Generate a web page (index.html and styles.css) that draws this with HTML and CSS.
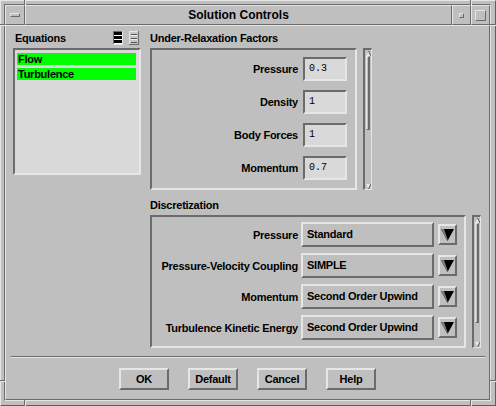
FILE: index.html
```html
<!DOCTYPE html>
<html>
<head>
<meta charset="utf-8">
<link rel="stylesheet" href="styles.css">
</head>
<body>
<div class="window">
  <span class="tick tick-v tick-tl"></span>
  <span class="tick tick-v tick-tr"></span>
  <span class="tick tick-v tick-bl"></span>
  <span class="tick tick-v tick-br"></span>
  <span class="tick tick-h tick-lt"></span>
  <span class="tick tick-h tick-lb"></span>
  <span class="tick tick-h tick-rt"></span>
  <span class="tick tick-h tick-rb"></span>
  <div class="frame-inner">
    <div class="titlebar">
      <div class="tb-seg tb-menu"><span class="menu-bar"></span></div>
      <div class="tb-seg tb-title">Solution Controls</div>
      <div class="tb-seg tb-small"><span class="mini-sq"></span></div>
      <div class="tb-seg tb-small"><span class="max-sq"></span></div>
    </div>
    <div class="client">
      <div class="main">
        <div class="eq-col">
          <div class="eq-head">
            <span class="label">Equations</span>
            <span class="icons">
              <svg width="10" height="14" viewBox="0 0 10 14">
                <rect width="10" height="14" fill="#e6e6e6"/>
                <rect width="9" height="13" fill="#6b6b6b"/>
                <rect x="1" y="1" width="8" height="12" fill="#ffffff"/>
                <rect x="1" y="1" width="8" height="3" fill="#000"/>
                <rect x="1" y="5" width="8" height="3" fill="#000"/>
                <rect x="1" y="9" width="8" height="3" fill="#000"/>
              </svg>
              <svg width="10" height="14" viewBox="0 0 10 14">
                <rect width="10" height="14" fill="#6b6b6b"/>
                <rect width="9" height="13" fill="#e6e6e6"/>
                <rect x="1" y="1" width="8" height="12" fill="#c6c6c6"/>
                <rect x="2" y="3" width="6" height="1" fill="#555"/>
                <rect x="2" y="4" width="6" height="1" fill="#f0f0f0"/>
                <rect x="2" y="7" width="6" height="1" fill="#555"/>
                <rect x="2" y="8" width="6" height="1" fill="#f0f0f0"/>
                <rect x="2" y="11" width="6" height="1" fill="#555"/>
              </svg>
            </span>
          </div>
          <div class="listbox">
            <div class="item">Flow</div>
            <div class="item">Turbulence</div>
          </div>
        </div>
        <div class="right-col">
          <div class="sec-head">Under-Relaxation Factors</div>
          <div class="sec-row urf-row">
            <div class="panel urf">
              <div class="frow"><span class="lbl">Pressure</span><span class="entry">0.3</span></div>
              <div class="frow"><span class="lbl">Density</span><span class="entry">1</span></div>
              <div class="frow"><span class="lbl">Body Forces</span><span class="entry">1</span></div>
              <div class="frow"><span class="lbl">Momentum</span><span class="entry">0.7</span></div>
            </div>
            <div class="vscroll">
              <span class="vs-arrow"><svg width="5" height="5" viewBox="0 0 5 5"><polygon points="0,5 2.5,0 5,5" fill="#e6e6e6"/><line x1="2.5" y1="0" x2="5" y2="5" stroke="#555" stroke-width="1"/></svg></span>
              <span class="slider slider-urf"></span>
              <span class="vs-fill"></span>
              <span class="vs-arrow"><svg width="5" height="5" viewBox="0 0 5 5"><polygon points="0,0 5,0 2.5,5" fill="#e6e6e6"/><line x1="5" y1="0" x2="2.5" y2="5" stroke="#555" stroke-width="1"/></svg></span>
            </div>
          </div>
          <div class="sec-head disc-head">Discretization</div>
          <div class="sec-row disc-row">
            <div class="panel disc">
              <div class="drow"><span class="lbl">Pressure</span><span class="opt">Standard</span><span class="arrow-btn"><svg width="13" height="12" viewBox="0 0 13 12"><polygon points="0,0 13,0 6.5,12" fill="#000"/><polygon points="0,0 3,0 6.8,11 6.5,12" fill="#7a7a7a"/></svg></span></div>
              <div class="drow"><span class="lbl">Pressure-Velocity Coupling</span><span class="opt">SIMPLE</span><span class="arrow-btn"><svg width="13" height="12" viewBox="0 0 13 12"><polygon points="0,0 13,0 6.5,12" fill="#000"/><polygon points="0,0 3,0 6.8,11 6.5,12" fill="#7a7a7a"/></svg></span></div>
              <div class="drow"><span class="lbl">Momentum</span><span class="opt">Second Order Upwind</span><span class="arrow-btn"><svg width="13" height="12" viewBox="0 0 13 12"><polygon points="0,0 13,0 6.5,12" fill="#000"/><polygon points="0,0 3,0 6.8,11 6.5,12" fill="#7a7a7a"/></svg></span></div>
              <div class="drow"><span class="lbl">Turbulence Kinetic Energy</span><span class="opt">Second Order Upwind</span><span class="arrow-btn"><svg width="13" height="12" viewBox="0 0 13 12"><polygon points="0,0 13,0 6.5,12" fill="#000"/><polygon points="0,0 3,0 6.8,11 6.5,12" fill="#7a7a7a"/></svg></span></div>
            </div>
            <div class="vscroll">
              <span class="vs-arrow"><svg width="5" height="5" viewBox="0 0 5 5"><polygon points="0,5 2.5,0 5,5" fill="#e6e6e6"/><line x1="2.5" y1="0" x2="5" y2="5" stroke="#555" stroke-width="1"/></svg></span>
              <span class="slider slider-disc"></span>
              <span class="vs-fill"></span>
              <span class="vs-arrow"><svg width="5" height="5" viewBox="0 0 5 5"><polygon points="0,0 5,0 2.5,5" fill="#e6e6e6"/><line x1="5" y1="0" x2="2.5" y2="5" stroke="#555" stroke-width="1"/></svg></span>
            </div>
          </div>
        </div>
      </div>
      <div class="sep"></div>
      <div class="buttons">
        <span class="btn">OK</span>
        <span class="btn">Default</span>
        <span class="btn">Cancel</span>
        <span class="btn">Help</span>
      </div>
    </div>
  </div>
</div>
</body>
</html>
```

FILE: styles.css
```css
* { box-sizing: border-box; }
html, body { margin: 0; padding: 0; }
body {
  width: 496px;
  height: 406px;
  overflow: hidden;
  background: #bfbfbf;
  font-family: "Liberation Sans", Arial, sans-serif;
  font-weight: bold;
  font-size: 11px;
  letter-spacing: -0.25px;
  color: #000;
}

.window {
  position: relative;
  width: 496px;
  height: 406px;
  background: #bfbfbf;
  border: 1px solid;
  border-color: #e6e6e6 #5e5e5e #5e5e5e #e6e6e6;
  padding: 3px 4px 4px 3px;
}

.tick { position: absolute; display: block; }
.tick-v { width: 2px; border-left: 1px solid #6b6b6b; border-right: 1px solid #e6e6e6; }
.tick-h { height: 2px; border-top: 1px solid #6b6b6b; border-bottom: 1px solid #e6e6e6; }
.tick-tl { left: 23px; top: -1px; height: 5px; }
.tick-tr { left: 469px; top: -1px; height: 5px; }
.tick-bl { left: 23px; top: 399px; height: 6px; }
.tick-br { left: 469px; top: 399px; height: 6px; }
.tick-lt { left: -1px; top: 23px; width: 5px; }
.tick-lb { left: -1px; top: 379px; width: 5px; }
.tick-rt { left: 489px; top: 23px; width: 6px; }
.tick-rb { left: 489px; top: 379px; width: 6px; }

.frame-inner {
  height: 100%;
  border: 1px solid;
  border-color: #6b6b6b #e6e6e6 #e6e6e6 #6b6b6b;
  display: flex;
  flex-direction: column;
}

.titlebar { display: flex; height: 20px; }
.tb-seg {
  border: 1px solid;
  border-color: #e6e6e6 #6b6b6b #6b6b6b #e6e6e6;
  display: flex;
  align-items: center;
  justify-content: center;
}
.tb-menu { width: 20px; }
.tb-title { flex: 1; font-size: 12px; letter-spacing: 0; line-height: 18px; }
.tb-small { width: 19px; }
.menu-bar {
  width: 10px; height: 4px;
  border: 1px solid;
  border-color: #e6e6e6 #6b6b6b #6b6b6b #e6e6e6;
}
.mini-sq {
  width: 5px; height: 5px;
  border: 1px solid;
  border-color: #e6e6e6 #6b6b6b #6b6b6b #e6e6e6;
}
.max-sq {
  width: 11px; height: 11px;
  border: 1px solid;
  border-color: #e6e6e6 #6b6b6b #6b6b6b #e6e6e6;
}

.client {
  flex: 1;
  border: 1px solid;
  border-color: #e6e6e6 #6b6b6b #6b6b6b #e6e6e6;
  display: flex;
  flex-direction: column;
}

.main { display: flex; padding: 5px 0 0 7px; }

.eq-col { width: 128px; margin-right: 9px; }
.eq-head { height: 17px; display: flex; justify-content: space-between; padding: 0 2px; }
.eq-head .label { line-height: 15px; }
.icons { display: flex; gap: 6px; }
.icons svg { display: block; }
.listbox {
  height: 127px;
  border: 2px solid;
  border-color: #6b6b6b #e6e6e6 #e6e6e6 #6b6b6b;
  background: #d9d9d9;
  padding: 3px 3px 0 2px;
}
.item {
  height: 12px;
  line-height: 12px;
  background: #00ff00;
  padding-left: 1px;
  margin-bottom: 3px;
}

.right-col { width: 331px; }
.sec-head { height: 17px; line-height: 15px; }
.disc-head { height: 25px; padding-top: 8px; }
.sec-row { display: flex; gap: 6px; }
.urf-row { height: 142px; }
.disc-row { height: 133px; }

.panel {
  border: 2px solid;
  border-color: #6b6b6b #e6e6e6 #e6e6e6 #6b6b6b;
  display: flex;
  flex-direction: column;
  align-items: flex-end;
  overflow: hidden;
}
.urf { width: 207px; padding: 7px 8px 0 0; gap: 9px; }
.disc { width: 316px; padding: 5px 7px 0 0; gap: 6px; }

.frow, .drow { display: flex; align-items: center; }
.frow .lbl { margin-right: 5px; }
.drow .lbl { margin-right: 3px; }
.entry {
  width: 44px;
  height: 24px;
  border: 2px solid;
  border-color: #6b6b6b #e6e6e6 #e6e6e6 #6b6b6b;
  background: #d9d9d9;
  font-family: "Liberation Mono", monospace;
  font-weight: normal;
  font-size: 10px;
  letter-spacing: 0;
  line-height: 20px;
  padding-left: 4px;
}
.opt {
  width: 133px;
  height: 25px;
  border: 2px solid;
  border-color: #e6e6e6 #6b6b6b #6b6b6b #e6e6e6;
  line-height: 21px;
  padding-left: 4px;
}
.arrow-btn {
  width: 19px;
  height: 21px;
  margin-left: 4px;
  border: 2px solid;
  border-color: #e6e6e6 #6b6b6b #6b6b6b #e6e6e6;
  display: flex;
  align-items: center;
  justify-content: center;
}
.arrow-btn svg { display: block; }

.vscroll {
  width: 9px;
  height: 100%;
  border-style: solid;
  border-width: 2px 1px 1px 2px;
  border-color: #6b6b6b #e6e6e6 #e6e6e6 #6b6b6b;
  display: flex;
  flex-direction: column;
}
.vs-arrow { height: 6px; display: flex; align-items: center; justify-content: center; }
.vs-arrow svg { display: block; }
.slider {
  margin-left: 1px;
  width: 4px;
  border-style: solid;
  border-width: 1px 2px 1px 1px;
  border-color: #e6e6e6 #6b6b6b #6b6b6b #e6e6e6;
}
.slider-urf { height: 74px; }
.slider-disc { height: 100px; }
.vs-fill { flex: 1; }

.sep {
  height: 2px;
  margin: 8px 4px 0 5px;
  border-top: 1px solid #6b6b6b;
  border-bottom: 1px solid #e6e6e6;
}

.buttons { display: flex; justify-content: center; gap: 19px; margin-top: 10px; }
.btn {
  width: 50px;
  height: 22px;
  border: 2px solid;
  border-color: #e6e6e6 #6b6b6b #6b6b6b #e6e6e6;
  line-height: 18px;
  text-align: center;
}
```
